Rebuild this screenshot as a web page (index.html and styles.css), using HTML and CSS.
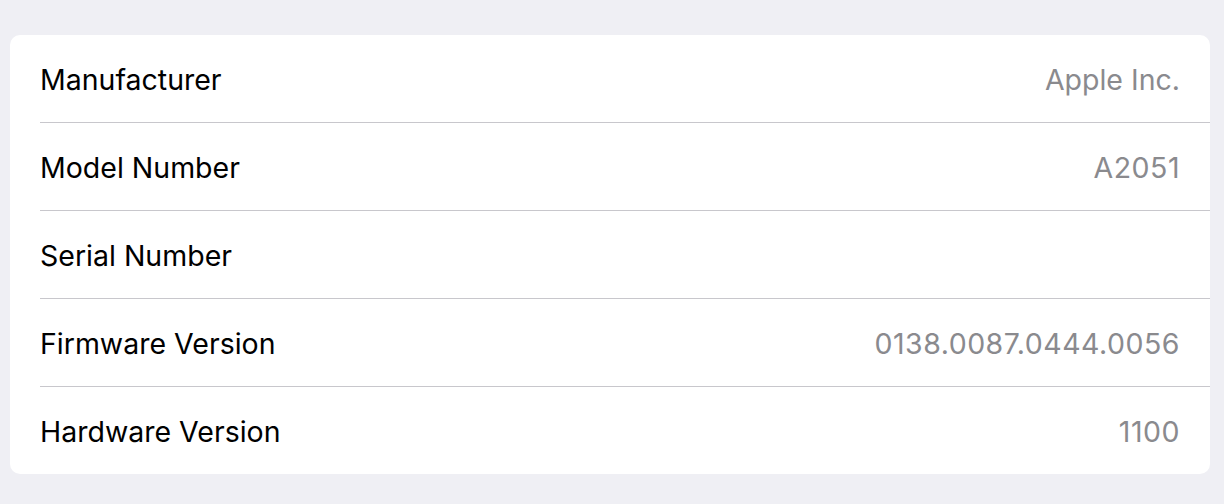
FILE: index.html
```html
<!DOCTYPE html>
<html lang="en">
<head>
<meta charset="utf-8">
<title>About</title>
<link rel="stylesheet" href="styles.css">
</head>
<body>
<div class="page">
  <div class="card">
    <div class="row"><span class="label">Manufacturer</span><span class="value">Apple Inc.</span></div>
    <div class="row"><span class="label">Model Number</span><span class="value value-num">A2051</span></div>
    <div class="row"><span class="label">Serial Number</span><span class="value"></span></div>
    <div class="row"><span class="label">Firmware Version</span><span class="value value-num">0138.0087.0444.0056</span></div>
    <div class="row"><span class="label">Hardware Version</span><span class="value value-num">1100</span></div>
  </div>
</div>
</body>
</html>
```
FILE: styles.css
```css
html, body {
  margin: 0;
  padding: 0;
  background: #efeff4;
}
.page {
  padding: 35px 14px 30px 10px;
  font-family: Inter, "Noto Sans", "Liberation Sans", sans-serif;
}
.card {
  background: #ffffff;
  border-radius: 10px;
  overflow: hidden;
}
.row {
  margin-left: 30px;
  padding-right: 30px;
  height: 87px;
  display: flex;
  align-items: center;
  justify-content: space-between;
  border-bottom: 1px solid #c8c7cc;
  font-size: 28.5px;
}
.row:last-child {
  border-bottom: none;
}
.label {
  color: #000000;
  padding-top: 2px;
}
.value {
  color: #8a8a8e;
  padding-top: 2px;
}
.value-num {
  letter-spacing: 0.5px;
}
```
